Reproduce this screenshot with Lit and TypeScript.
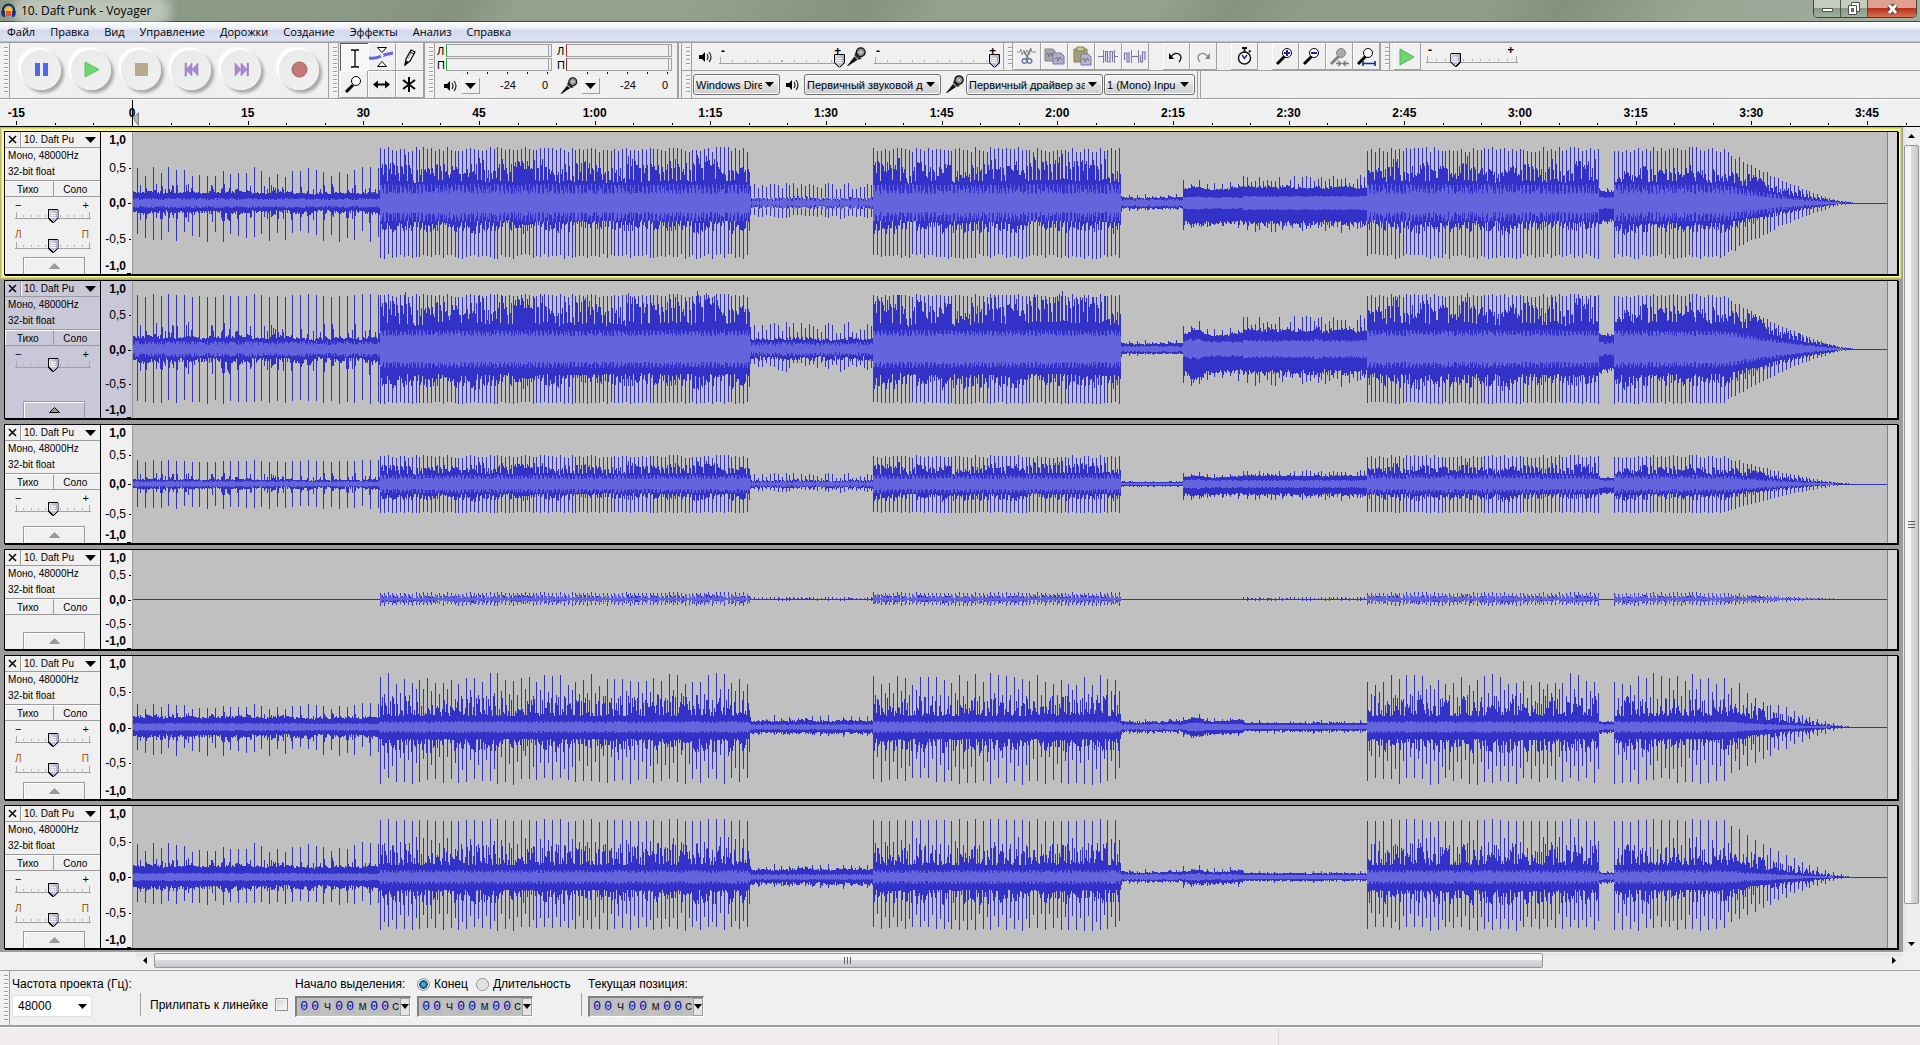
import { LitElement, html, svg, css, nothing } from "lit";
import { customElement, property } from "lit/decorators.js";

/* ---------- waveform model ---------- */

const CLIP_WIDTH = 1754;
const CLIP_SECONDS = 227.6;

interface Band {
  /** first column of the section */
  from: number;
  /** quiet body above / below the axis: [low, high] */
  up: [number, number];
  down: [number, number];
  /** peaks above / below the axis: [low, high] */
  peakUp: [number, number];
  peakDown: [number, number];
  /** distance between peaks in columns */
  period: number;
  /** rms half height: [between beats, on the beat] */
  rms: [number, number];
}

const band = (
  from: number, up: [number, number], down: [number, number],
  peakUp: [number, number], peakDown: [number, number],
  period: number, rms: [number, number],
): Band => ({ from, up, down, peakUp, peakDown, period, rms });

interface Track {
  height: number;
  controls: number;
  /** strength of the swell at the start of the sustained part */
  swell: number;
  selected?: boolean;
  focused?: boolean;
  bands: Band[];
}

const BEAT = 7.75;
const HALF = 3.9;

/* section starts, in columns from the start of the clip */
const VERSE = 247, BREAK = 617, VERSE2 = 740, QUIET = 988, PAD = 1050, PAD2 = 1110;
const VERSE3 = 1234, DIP = 1466, VERSE4 = 1481;

const tracks: Track[] = [
  {
    height: 142, controls: 2, swell: 0.12, focused: true,
    bands: [
      band(0, [8, 15], [7, 13], [26, 37], [28, 40], BEAT, [3, 5]),
      band(VERSE, [19, 50], [17, 32], [51, 56], [51, 56], HALF, [9, 19]),
      band(BREAK, [2, 9], [2, 8], [14, 20], [12, 16], HALF, [1, 6]),
      band(VERSE2, [19, 50], [17, 32], [51, 56], [51, 56], HALF, [9, 19]),
      band(QUIET, [4, 8], [4, 8], [7, 10], [6, 9], BEAT, [2, 4]),
      band(PAD, [12, 19], [16, 25], [16, 23], [20, 27], BEAT, [5, 6]),
      band(PAD2, [13, 21], [17, 28], [18, 28], [20, 30], HALF, [6, 7]),
      band(VERSE3, [19, 50], [17, 32], [51, 56], [51, 56], HALF, [9, 19]),
      band(DIP, [9, 17], [16, 24], [14, 17], [20, 24], BEAT, [5, 6]),
      band(VERSE4, [19, 46], [19, 33], [51, 56], [51, 56], HALF, [9, 19]),
    ],
  },
  {
    height: 137, controls: 1, swell: 0.4, selected: true,
    bands: [
      band(0, [8, 18], [8, 18], [52, 55], [51, 55], BEAT, [4, 8]),
      band(VERSE, [22, 60], [24, 42], [52, 55], [53, 55], HALF, [13, 19]),
      band(BREAK, [7, 15], [6, 15], [16, 27], [14, 24], HALF, [3, 7]),
      band(VERSE2, [22, 60], [24, 42], [52, 55], [53, 55], HALF, [13, 19]),
      band(QUIET, [4, 8], [4, 6], [7, 10], [5, 8], BEAT, [2, 3]),
      band(PAD, [12, 19], [19, 28], [16, 23], [25, 34], BEAT, [6, 8]),
      band(PAD2, [15, 26], [20, 32], [20, 34], [24, 38], HALF, [7, 9]),
      band(VERSE3, [22, 60], [24, 42], [52, 55], [53, 55], HALF, [13, 19]),
      band(DIP, [12, 18], [18, 28], [15, 18], [22, 28], BEAT, [5, 7]),
      band(VERSE4, [24, 56], [24, 42], [52, 55], [53, 55], HALF, [13, 19]),
    ],
  },
  {
    height: 118, controls: 1, swell: 0.2,
    bands: [
      band(0, [3, 7], [3, 7], [22, 24], [22, 25], BEAT, [2, 3]),
      band(VERSE, [9, 24], [9, 18], [26, 29], [28, 29], HALF, [5, 9]),
      band(BREAK, [2, 6], [2, 6], [6, 11], [5, 9], HALF, [1, 3]),
      band(VERSE2, [9, 24], [9, 18], [26, 29], [28, 29], HALF, [5, 9]),
      band(QUIET, [2, 3], [2, 3], [2, 4], [2, 3], BEAT, [1, 1]),
      band(PAD, [6, 9], [8, 14], [8, 11], [12, 16], BEAT, [3, 4]),
      band(PAD2, [7, 11], [9, 15], [8, 14], [10, 17], HALF, [3, 4]),
      band(VERSE3, [9, 24], [9, 18], [26, 29], [28, 29], HALF, [5, 9]),
      band(DIP, [5, 8], [8, 12], [7, 9], [9, 12], BEAT, [3, 4]),
      band(VERSE4, [9, 24], [9, 18], [26, 29], [28, 29], HALF, [5, 9]),
    ],
  },
  {
    height: 99, controls: 0, swell: 0,
    bands: [
      band(0, [0, 0], [1, 1], [0, 0], [1, 1], BEAT, [0, 0]),
      band(VERSE, [1, 5], [1, 5], [5, 7], [5, 7], HALF, [1, 4]),
      band(BREAK, [0, 1], [1, 1], [1, 2], [1, 2], HALF, [0, 0]),
      band(VERSE2, [1, 5], [1, 5], [5, 7], [5, 7], HALF, [1, 4]),
      band(QUIET, [0, 0], [1, 1], [0, 0], [1, 1], BEAT, [0, 0]),
      band(PAD2, [0, 1], [1, 1], [1, 2], [1, 2], HALF, [0, 0]),
      band(VERSE3, [1, 5], [1, 5], [5, 7], [5, 7], HALF, [1, 4]),
      band(DIP, [0, 0], [1, 1], [0, 0], [1, 1], BEAT, [0, 0]),
      band(VERSE4, [1, 5], [1, 5], [5, 7], [5, 7], HALF, [1, 4]),
    ],
  },
  {
    height: 143, controls: 2, swell: 0.5,
    bands: [
      band(0, [7, 15], [7, 13], [18, 24], [20, 30], BEAT, [3, 4]),
      band(VERSE, [11, 32], [12, 26], [26, 54], [28, 58], HALF, [4, 6]),
      band(BREAK, [4, 10], [4, 9], [7, 12], [6, 10], BEAT, [2, 3]),
      band(VERSE2, [11, 32], [12, 26], [26, 54], [28, 58], HALF, [4, 6]),
      band(QUIET, [3, 9], [3, 8], [5, 10], [5, 8], BEAT, [2, 3]),
      band(PAD, [5, 9], [5, 9], [7, 10], [7, 10], BEAT, [3, 3]),
      band(PAD2, [3, 6], [3, 6], [4, 7], [4, 7], BEAT, [2, 2]),
      band(VERSE3, [11, 32], [12, 26], [26, 54], [28, 58], HALF, [4, 6]),
      band(DIP, [4, 8], [4, 9], [5, 8], [6, 9], BEAT, [2, 3]),
      band(VERSE4, [11, 32], [12, 26], [26, 54], [28, 58], HALF, [4, 6]),
    ],
  },
  {
    height: 142, controls: 2, swell: 0.3,
    bands: [
      band(0, [8, 16], [8, 15], [25, 35], [24, 28], BEAT, [3, 4]),
      band(VERSE, [12, 34], [13, 28], [26, 58], [36, 54], HALF, [4, 7]),
      band(BREAK, [5, 12], [4, 11], [9, 13], [8, 12], BEAT, [2, 3]),
      band(VERSE2, [12, 34], [13, 28], [26, 58], [36, 54], HALF, [4, 7]),
      band(QUIET, [3, 8], [3, 7], [5, 9], [5, 8], BEAT, [2, 3]),
      band(PAD, [4, 9], [4, 9], [6, 11], [6, 11], BEAT, [2, 3]),
      band(PAD2, [3, 5], [3, 5], [4, 6], [4, 6], BEAT, [2, 2]),
      band(VERSE3, [12, 34], [13, 28], [26, 58], [36, 54], HALF, [4, 7]),
      band(DIP, [3, 7], [4, 9], [5, 8], [6, 9], BEAT, [2, 3]),
      band(VERSE4, [12, 34], [13, 28], [26, 58], [36, 54], HALF, [4, 7]),
    ],
  },
];

const rand = (n: number, salt: number) => {
  let h = Math.imul(n + 1, 0x9e3779b1) ^ Math.imul(salt + 7, 0x85ebca6b);
  h = Math.imul(h ^ (h >>> 15), 0x2c1b3c6d);
  h = Math.imul(h ^ (h >>> 12), 0x297a2d39);
  return ((h ^ (h >>> 15)) >>> 0) / 4294967296;
};

const mix = ([a, b]: [number, number], t: number) => a + (b - a) * t;

const fade = (x: number) => {
  if (x < 1590) return 1;
  const u = (x - 1590) / 135;
  return u >= 1 ? 0 : Math.pow(1 - u, 1.5);
};

/** Extra swell in the sustained part that follows the quiet section. */
const swell = (x: number, amount: number) => {
  const d = (x - 1062) / 8;
  const e = (x - 1184) / 4;
  return 1 + amount * Math.exp(-d * d) + amount * 0.4 * Math.exp(-e * e);
};

function wavePaths(track: Track, index: number) {
  const mid = Math.floor(track.height / 2);
  const upper: number[] = [], lower: number[] = [], rms: number[] = [];
  for (let x = 0; x < CLIP_WIDTH; x++) {
    let b = track.bands[0];
    for (const c of track.bands) if (x >= c.from) b = c;
    const origin = b.from === 0 ? 4 : b.from;
    const step = Math.floor((x - origin) / b.period + 0.001);
    const onBeat = step !== Math.floor((x - 1 - origin) / b.period + 0.001);
    const near = (x - origin) / b.period - step;
    const full = b.from === VERSE || b.from === VERSE2 || b.from === VERSE3 || b.from === VERSE4;
    const sparse = index >= 4;
    // a few beats share a level, so the body looks clustered
    const phrase = Math.floor(x / 13);
    const cluster = full && sparse
      ? Math.pow(rand(x, 9), 1.8)
      : 0.35 * rand(phrase, 3) + 0.3 * rand(step, 5) + 0.35 * rand(x, 9);
    const clusterDown = full && sparse ? Math.pow(rand(x, 11), 1.8) : 0.3 * rand(phrase, 7) + 0.7 * rand(x, 11);
    const gap = full && !sparse && near > 0.7 ? (rand(step, 41) > 0.45 ? 0.2 : 0.8) : 1;
    const decay = full ? 1 : 1 - 0.4 * near;
    const g = fade(x) * (x > QUIET && x < VERSE3 ? swell(x, track.swell) : 1);
    let up = mix(b.up, cluster * gap * decay);
    let down = mix(b.down, clusterDown * gap * decay);
    let r = mix(b.rms, full ? (near < 0.3 ? 0.9 : 0.7 * rand(x, 13) * gap) : rand(x, 13));
    if (onBeat) {
      let strong = rand(x, 17);
      let strongDown = rand(x, 19);
      if (sparse && full) {
        strong = step % 2 === 0 ? (index === 5 ? 0.92 : 0.55) + (index === 5 ? 0.08 : 0.45) * strong : 0.45 * strong;
        strongDown = step % 2 === 0 ? 0.75 + 0.25 * strongDown : 0.5 * strongDown;
      }
      up = mix(b.peakUp, strong);
      down = mix(b.peakDown, strongDown);
      r = mix(b.rms, 0.85 + 0.15 * rand(x, 23));
    } else if (b.from === 0 && index !== 3 && rand(x, 29) > 0.72) {
      up += (b.peakUp[1] - b.up[1]) * 0.4 * rand(x, 31);
      down += (b.peakDown[1] - b.down[1]) * 0.35 * rand(x, 37);
    }
    upper.push(Math.round(up * g));
    lower.push(Math.max(1, Math.round(down * g)));
    rms.push(Math.round(r * g));
  }
  const outline = (top: number[], bottom: number[]) => {
    let d = `M0 ${mid}`;
    for (let x = 0; x < CLIP_WIDTH; x++) d += `V${mid - top[x]}H${x + 1}`;
    for (let x = CLIP_WIDTH - 1; x >= 0; x--) d += `V${mid + bottom[x]}H${x}`;
    return d + "Z";
  };
  return { peaks: outline(upper, lower), rms: outline(rms, rms) };
}

/* ---------- shared styles ---------- */

const base = css`
  * { box-sizing: border-box; }
  button, input, select {
    font: inherit; color: inherit; margin: 0; padding: 0; border: 0; border-radius: 0;
    background: none; appearance: none; outline: none;
  }
  svg { display: block; }
  .range { display: block; width: 100%; height: 14px; background:
      linear-gradient(#a0a0a0, #a0a0a0) 0 9px / 100% 1px no-repeat,
      linear-gradient(#a8a8a8, #a8a8a8) calc(100% - 1px) 3px / 1px 6px no-repeat,
      linear-gradient(#a8a8a8, #a8a8a8) 1px 3px / 1px 6px no-repeat,
      repeating-linear-gradient(90deg, #b0b0b0 0 1px, transparent 1px 10%) 1px 6px / calc(100% - 3px) 2px no-repeat; }
  .range::-webkit-slider-thumb {
    appearance: none; width: 11px; height: 14px;
    clip-path: polygon(1px 0, 10px 0, 11px 1px, 11px 9px, 6px 14px, 5px 14px, 0 9px, 0 1px);
    background:
      linear-gradient(#fff, #fff) 3px 4px / 5px 1px no-repeat,
      linear-gradient(#fff, #fff) 3px 6px / 5px 1px no-repeat,
      linear-gradient(#fff, #fff) 3px 8px / 5px 1px no-repeat,
      linear-gradient(90deg, #dcdcec, #acacca) 1px 1px / 9px 8px no-repeat,
      conic-gradient(from -45deg at 50% 100%, #bcbcd6 90deg, #000 0) 1px 9px / 9px 4px no-repeat,
      #000;
  }
`;

const speaker = svg`<g fill="#000"><path d="M1 5h3l3-3v10l-3-3H1z"/><path d="M9 4q2 3 0 6M11 2q4 5 0 10" fill="none" stroke="#222" stroke-width="1.2"/></g>`;
const microphone = svg`<g><path d="M1 18L8 9l3 3-9 6z" fill="#111"/><path d="M8 8l4 4 3-1-6-6z" fill="#333"/><circle cx="14" cy="5" r="4.2" fill="#777" stroke="#111" stroke-width="1.2"/><path d="M12 3l4 4M16 3l-4 4M14 2v6M11 5h6" stroke="#ddd" stroke-width=".7"/></g>`;

/* ---------- one audio track ---------- */

@customElement("audio-track")
export class AudioTrack extends LitElement {
  @property({ attribute: false }) track!: Track;
  @property({ type: Number }) index = 0;

  static styles = [base, css`
    :host { display: block; font: 11px/16px "Liberation Sans", Arial, sans-serif; color: #000; }
    .track { display: flex; border: 1px solid #000; box-shadow: 1px 1px 0 #000; --face: #f0f0f0; }
    .selected { --face: #c8c8d8; }
    .focused { box-shadow: 1px 1px 0 #000, 0 0 0 2px #ffff80, 0 0 0 3px #dcdc6e, 0 0 0 4px #b8b882; }
    .panel { flex: none; width: 96px; border-right: 1px solid #000; background: var(--face);
      display: flex; flex-direction: column; }
    .head { display: flex; height: 16px; border-bottom: 1px solid #9a9a9a; }
    .close { width: 16px; border-right: 1px solid #9a9a9a; display: grid; place-items: center; }
    .name { flex: 1; display: flex; align-items: center; justify-content: space-between;
      padding: 0 4px 0 2px; border-left: 1px solid #fff; font-size: 10px; white-space: nowrap; }
    .format { margin: 0; padding: 0 3px; height: 32px; font-size: 10px; line-height: 16px; white-space: nowrap; }
    .pair { display: flex; height: 17px; border-top: 1px solid #9a9a9a; border-bottom: 1px solid #9a9a9a; }
    .pair button { flex: 1; border: 1px solid #fff; border-width: 1px 0 0 1px; font-size: 10px; line-height: 13px; padding-right: 3px; }
    .pair button + button { border-left-color: #9a9a9a; }
    .sliders { display: flex; flex-direction: column; gap: 7px; padding: 3px 9px 0 10px; }
    .slider { display: block; height: 23px; }
    .ends { display: flex; justify-content: space-between; padding: 0 2px 0 0; height: 9px; line-height: 10px; }
    .letters { color: #9a5a20; font-size: 10px; }
    .collapse { margin: auto auto 0 18px; width: 62px; height: 17px; border: 1px solid #9a9a9a;
      border-bottom: 0; box-shadow: inset 1px 1px 0 #fff; display: grid; place-items: center; }
    .scale { flex: none; width: 32px; border: 1px solid #9a9a9a; border-width: 0 1px 0 0;
      background: var(--face); font-size: 12px; }
    .scale svg, .wave svg { width: 100%; height: 100%; }
    .bold { font-weight: bold; }
    .wave { flex: 1; min-width: 0; background: #c0c0c0; }
    .after { flex: none; width: 10px; background: #d4d4d4; border-left: 1px solid #808080; }
  `];

  private slider(label: string, left: string, right: string, letters = false) {
    return html`<label class="slider">
      <span class="ends ${letters ? "letters" : ""}"><span>${left}</span><span>${right}</span></span>
      <input class="range" type="range" min="0" max="100" value="50" aria-label=${label} />
    </label>`;
  }

  render() {
    const t = this.track;
    const h = t.height;
    const wave = wavePaths(t, this.index);
    const label = (y: string, text: string, bold = false) =>
      svg`<text class=${bold ? "bold" : ""} x="25" y=${y} dy="4" text-anchor="end">${text}</text>`;
    return html`<section class="track ${t.selected ? "selected" : ""} ${t.focused ? "focused" : ""}">
      <div class="panel">
        <div class="head">
          <button class="close" aria-label="Закрыть"><svg width="9" height="9" viewBox="0 0 9 9"><path d="M1 1l7 7M8 1L1 8" stroke="#000" stroke-width="1.5"/></svg></button>
          <button class="name"><span>10. Daft Pu</span><svg width="11" height="6" viewBox="0 0 11 6"><path d="M0 0h11L5.500 6z"/></svg></button>
        </div>
        <p class="format">Моно, 48000Hz<br />32-bit float</p>
        <div class="pair"><button>Тихо</button><button>Соло</button></div>
        <div class="sliders">
          ${t.controls > 0 ? this.slider("Громкость", "−", "+") : nothing}
          ${t.controls > 1 ? this.slider("Баланс", "Л", "П", true) : nothing}
        </div>
        <button class="collapse" aria-label="Свернуть"><svg width="11" height="6" viewBox="0 0 11 6"><path d="M.5 5.500h10L5.500 .5z" fill="#9a9a9a" stroke=${t.selected ? "#000" : "#9a9a9a"}/></svg></button>
      </div>
      <div class="scale" style="height:${h}px">
        <svg>
          ${label("8", "1,0", true)}${label("25%", "0,5")}${label("50%", "0,0", true)}${label("75%", "-0,5")}
          <g transform="translate(0 -8)">${label("100%", "-1,0", true)}</g>
          <g shape-rendering="crispEdges" fill="#000">
            <rect x="28" y="25%" width="2" height="1"/><rect x="27" y="50%" width="3" height="1"/>
            <rect x="28" y="75%" width="2" height="1"/>
            <g transform="translate(0 -1)"><rect x="26" y="100%" width="4" height="1"/></g>
          </g>
        </svg>
      </div>
      <div class="wave">
        <svg viewBox="0 0 ${CLIP_WIDTH} ${h}" preserveAspectRatio="none" shape-rendering="crispEdges">
          <path d=${wave.peaks} fill="#3232c8"/><path d=${wave.rms} fill="#6464dc"/>
        </svg>
      </div>
      <div class="after"></div>
    </section>`;
  }
}

/* ---------- application window ---------- */

const menu = ["Файл", "Правка", "Вид", "Управление", "Дорожки", "Создание", "Эффекты", "Анализ", "Справка"];

const transport = [
  { name: "Пауза", icon: svg`<path d="M8 8h5v13H8zM16 8h5v13h-5z" fill="#4a6ae8"/>` },
  { name: "Воспроизвести", icon: svg`<path d="M8 7l14 7.500-14 7.500z" fill="#6cd86c" stroke="#58b058" stroke-width=".8"/>` },
  { name: "Остановить", icon: svg`<path d="M8 8h13v13H8z" fill="#b8a88c"/>` },
  { name: "К началу", icon: svg`<path d="M8 8h1.500v13H8zM15 8v13l-6-6.500zM21 8v13l-6-6.500z" fill="#a888d4" stroke="#8c70b8" stroke-width=".5"/>` },
  { name: "К концу", icon: svg`<path d="M20 8h1.500v13H20zM8 8v13l6-6.500zM14 8v13l6-6.500z" fill="#a888d4" stroke="#8c70b8" stroke-width=".5"/>` },
  { name: "Записать", icon: svg`<circle cx="14.500" cy="14.500" r="7.500" fill="#c07878" stroke="#a06060"/>` },
];

const tools = [
  { name: "Выделение", icon: svg`<path d="M10 5h3l1 1 1-1h3M14 6v15M10 22h3l1-1 1 1h3" fill="none" stroke="#000" stroke-width="1.3"/>` },
  { name: "Огибающая", icon: svg`<path d="M1 14q7 1 12-2 6-2 12-3" fill="none" stroke="#6464dc" stroke-width="3"/><path d="M9.500 3.500h9L14 8.500zM9.500 22.500h9L14 17.500z" fill="#fff" stroke="#000"/><circle cx="14" cy="11.500" r="1.500" fill="#fff"/>` },
  { name: "Рисование", icon: svg`<path d="M9 21l1-6 5-9 4 2-5 9-5 4z" fill="#fff" stroke="#000" stroke-width="1.200"/><path d="M14 8l4 2M9 21l1-4 2 1z" fill="#000" stroke="#000"/><path d="M12 15l3-6" stroke="#888"/>` },
  { name: "Масштаб", icon: svg`<path d="M6 21l7-7" stroke="#000" stroke-width="3"/><circle cx="16" cy="10" r="4.500" fill="#fff" stroke="#000"/>` },
  { name: "Перемещение", icon: svg`<path d="M9 13.500h10" stroke="#000" stroke-width="2"/><path d="M5 13.500l5-4v8zM22 13.500l-5-4v8z"/>` },
  { name: "Универсальный", icon: svg`<path d="M13 6v15M7 9l12 9M19 9L7 18" stroke="#000" stroke-width="2"/>` },
];

const lens = (fill: string, extra: unknown, stroke = "#000") =>
  svg`<path d="M5 21l8-8" stroke=${stroke} stroke-width="3"/><circle cx="15" cy="10" r="4.500" fill=${fill} stroke=${stroke}/>${extra}`;

const editGroups = [
  [
    { name: "Вырезать", icon: svg`<path d="M3 9h3l1-3 1 6 2-5 1 4 2-4 2 5 2-6 1 3h4" fill="none" stroke="#888" stroke-width=".9"/><path d="M17 5l-5 11M10 9l5 7" stroke="#777" fill="none" stroke-width="1.300"/><circle cx="10.500" cy="18" r="2.300" fill="none" stroke="#7474b4" stroke-width="1.400"/><circle cx="15.500" cy="18" r="2.300" fill="none" stroke="#7474b4" stroke-width="1.400"/>` },
    { name: "Копировать", icon: svg`<path d="M4 6h8l2 2v10H4z" fill="#a8a8a8" stroke="#808088"/><path d="M12 10h8l3 3v8H12z" fill="#b0b0c4" stroke="#7474b4"/><path d="M5 12l2-2 1 4 2-4 1 3M14 16l2-2 1 4 2-4 2 3" fill="none" stroke="#70708c"/>` },
    { name: "Вставить", icon: svg`<path d="M6 6h13v13H6z" fill="#a4a074" stroke="#84804c"/><path d="M9 4h7v4H9z" fill="#ccc8a0" stroke="#84804c"/><path d="M13 11h7l3 3v8H13z" fill="#b8b8c8" stroke="#7474b4"/><path d="M14 17l2-2 1 4 2-4 2 3" fill="none" stroke="#70708c"/>` },
    { name: "Обрезать", icon: svg`<path d="M3 13.500h5M19 13.500h4" stroke="#7474b4" stroke-width="1.200"/><path d="M8.500 7v13M19.500 7v13" stroke="#808080"/><path d="M10.500 19V8.500h2V19h2.500V8.500h2.500V19" fill="none" stroke="#7474b4" stroke-width="1.200"/>` },
    { name: "Тишина", icon: svg`<path d="M9 13.500h8" stroke="#7474b4" stroke-width="1.200"/><path d="M9.500 7v13M16.500 7v13" stroke="#808080"/><path d="M2.500 17v-7h2.500v9h2V9M18.500 12v7h2V9h2.500v8" fill="none" stroke="#7474b4" stroke-width="1.200"/>` },
  ],
  [
    { name: "Отменить", icon: svg`<path d="M8 14q3-5 8-3 4 3 0 8" fill="none" stroke="#111" stroke-width="1.300"/><path d="M6 10v6h5z"/>` },
    { name: "Повторить", icon: svg`<path d="M18 14q-3-5-8-3-4 3 0 8" fill="none" stroke="#888" stroke-width="1.300"/><path d="M20 10v6h-5z" fill="#888"/>` },
  ],
  [
    { name: "Таймер", icon: svg`<circle cx="13.500" cy="15" r="6" fill="#fff" stroke="#111" stroke-width="1.500"/><path d="M11 5h5M13.500 5v4M18 9l1.500-1.500" stroke="#111" stroke-width="1.800"/><path d="M11 12l2.500 3.500 2.500-3.500" fill="none" stroke="#2020a8" stroke-width="1.500"/>` },
  ],
  [
    { name: "Увеличить", icon: lens("#fff", svg`<path d="M12 10h6M15 7v6" stroke="#2020a8" stroke-width="2"/>`) },
    { name: "Уменьшить", icon: lens("#fff", svg`<path d="M12 10h6" stroke="#2020a8" stroke-width="2"/>`) },
    { name: "К выделению", icon: lens("#aaa", svg`<path d="M10 20.500h5M17 20.500h6M12 18l3 2.500-3 2.500M20 18l-3 2.500 3 2.500" fill="none" stroke="#777" stroke-width="1.300"/>`, "#808080") },
    { name: "Весь проект", icon: lens("#fff", svg`<path d="M10 20.500h12M10 18v5M22 18v5" stroke="#2020a8" stroke-width="1.600"/>`) },
  ],
];

const icon27 = (content: unknown) => html`<svg width="26" height="26" viewBox="0 0 26 26">${content}</svg>`;

@customElement("app-root")
export class AppRoot extends LitElement {
  static styles = [base, css`
    :host { display: flex; flex-direction: column; min-height: 100vh; background: #f0f0f0; color: #000;
      font: 12px/16px "Open Sans", "Noto Sans", sans-serif; }
    .title { display: flex; align-items: center; height: 22px; padding: 0 3px 0 1px; border-bottom: 1px solid #404840;
      background: linear-gradient(125deg, #8c9a88 0 18%, #84927f 24%, #93a28f 27% 36%, #84927f 45%, #93a28f 49% 60%, #85937f 64%, #8f9d8b 68% 77%, #84917f 81%, #98a694 88%, #a3ae9f); }
    .title h1 { margin: 0 auto 0 5px; font: inherit; padding: 0 12px 0 0; border-radius: 8px;
      background: rgba(235, 240, 232, .5); box-shadow: 0 0 10px 8px rgba(235, 240, 232, .5); }
    .logo { position: relative; }
    .window { display: flex; align-self: flex-start; height: 18px; border: 1px solid #3c443c; border-top: 0;
      border-radius: 0 0 5px 5px; box-shadow: inset 0 0 0 1px rgba(255, 255, 255, .5); overflow: hidden; }
    .window button { width: 27px; display: grid; place-items: center; border-right: 1px solid #4c544c;
      background: linear-gradient(#c4ccc0 0 45%, #8a9886 50%, #a4b0a0); }
    .window .exit { width: 48px; border: 0; background: linear-gradient(#e0a090 0 45%, #b83020 50%, #d87050); }
    .menu { display: flex; gap: 15px; height: 20px; padding: 0 7px; border-bottom: 1px solid #b4b8cc; font-size: 11px;
      background: linear-gradient(#fff, #e8ecf6 35%, #d4daec 45%, #dce2f2); }
    .menu button { line-height: 19px; }

    .toolbars { display: flex; height: 57px; border-top: 1px solid #a0a0a0; border-bottom: 1px solid #a0a0a0; }
    .grip { flex: none; width: 10px; margin-right: 1px; border-right: 1px solid #a0a0a0; background:
      repeating-linear-gradient(#a0a0a0 0 1px, #fff 1px 2px, transparent 2px 4px) 4px 4px / 4px calc(100% - 8px) no-repeat; }
    .transport { display: flex; align-items: center; gap: 10px; padding: 0 9px 2px 10px; border-right: 1px solid #a0a0a0; }
    .round { width: 40px; height: 40px; border-radius: 50%; display: grid; place-items: center;
      background: linear-gradient(135deg, #e8e8e8, #f2f2f2);
      box-shadow: 3px 3px 3px #a8a8a8, -3px -3px 2px #fff; }
    .round:last-child { margin-left: 8px; }
    .tools { display: grid; grid-template-columns: repeat(3, 28px); grid-template-rows: 28px 27px; border-right: 1px solid #a0a0a0; }
    .tool { border: 1px solid #a0a0a0; border-width: 0 1px 1px 0; box-shadow: inset 1px 1px 0 #fff; overflow: hidden; }
    .tool.on { border: 1px solid #606060; border-width: 1px 0 0 1px; background: #f8f8f8; }
    .meters { display: flex; gap: 5px; padding: 1px 5px 0 1px; border-right: 2px solid #a0a0a0;
      font: 11px/14px "Liberation Sans", Arial, sans-serif; }
    .meter { width: 115px; }
    .channel { display: grid; grid-template-columns: 9px 1fr; height: 14px; }
    .channel i { border: 1px solid #a0a0a0; border-left: 1px solid #30a030; margin-bottom: 1px;
      background: linear-gradient(90deg, #a0a0a0, #a0a0a0) calc(100% - 2px) 0 / 1px 100% no-repeat; }
    .input i { border-left-color: #a03030; }
    .marks { height: 4px; margin: 0 0 1px 30px; background: repeating-linear-gradient(90deg, #000 0 1px, transparent 1px 20px) 0 0 / 100% 2px no-repeat; }
    .level { display: grid; grid-template-columns: 19px 18px 1fr 10px; align-items: center; height: 18px; gap: 4px; padding-left: 2px; }
    .level span { padding-bottom: 3px; }
    .level span:nth-of-type(1) { padding-left: 16px; }
    .drop { width: 18px; height: 16px; border: 1px solid #a0a0a0; border-width: 0 1px 1px 0; display: grid; place-items: center;
      box-shadow: inset 1px 1px 0 #fff; }
    .stack { flex: 1; display: flex; flex-direction: column; min-width: 0; margin-left: 2px; border-left: 1px solid #a0a0a0; }
    .row { display: flex; height: 27px; align-items: stretch; }
    .row + .row { border-top: 1px solid #a0a0a0; height: 28px; }
    .row:first-child { border-bottom: 0; }
    .mixer { display: flex; align-items: center; gap: 7px; padding-left: 5px; }
    .gain { display: block; width: 126px; height: 24px; font-weight: bold; }
    .signs { display: flex; justify-content: space-between; padding: 0 4px 0 2px; height: 9px; line-height: 12px; }
    .mic { margin: 0 0 0 -7px; }
    .mixer .gain:last-child { margin-right: 3px; }
    .edit { display: flex; }
    .edit button { width: 27px; border: 1px solid #a0a0a0; border-width: 0 1px 1px 0; box-shadow: inset 1px 1px 0 #fff; }
    .gap { width: 14px; }
    .row > .grip { border-left: 1px solid #a0a0a0; }
    .row > .grip:first-child { border-left: 0; }
    .play { margin-left: 3px; }
    .speed { width: 92px; margin: 1px 0 0 5px; }
    .devices { display: flex; align-items: center; gap: 1px; padding: 0 2px 0 0; border-right: 1px solid #a0a0a0; }
    .devices .small { margin: 0 4px 0 4px; }
    .devices .tall { margin: 0 0 0 2px; }
    .pick { display: grid; font: 11px/16px "Liberation Sans", Arial, sans-serif; }
    .pick > * { grid-area: 1 / 1; }
    .pick select { height: 21px; padding: 0 17px 0 2px; border: 1px solid #707070; border-radius: 3px; overflow: hidden;
      background: linear-gradient(#f2f2f2, #ebebeb 48%, #dddddd 50%, #cfcfcf); box-shadow: inset 0 0 0 1px #fcfcfc; }
    .pick .arrow, .rate .arrow { justify-self: end; align-self: center; margin: 0 5px 0 0; pointer-events: none; }
    .pick .arrow { margin-right: 6px; }
    .host { width: 87px; }
    .device { width: 137px; }
    .inputs { width: 91px; }
    .end { width: 3px; border-right: 1px solid #a0a0a0; }

    .ruler { height: 28px; padding: 0 33px 0 132px; border-top: 1px solid #fff; border-bottom: 1px solid #000; overflow: hidden;
      font: bold 12px/14px "Liberation Sans", Arial, sans-serif; }
    .ruler svg { width: 100%; height: 26px; overflow: visible; }

    .canvas { display: grid; grid-template-columns: 1fr 17px; }
    .tracks { background: #9c9c9c; padding: 4px 5px 1px 4px; min-width: 0; }
    .tracks audio-track { margin-bottom: 5px; }
    .tracks audio-track:last-child { margin-bottom: 2px; }
    .vbar { display: flex; flex-direction: column; align-items: center; background: linear-gradient(90deg, #e2e2e2, #eee 30%, #f0f0f0); }
    .vbar .thumb { width: 15px; flex: 1; border: 1px solid #969696; border-radius: 2px; display: grid; place-items: center;
      background: linear-gradient(90deg, #f4f4f4 0 45%, #dcdce0 50%, #c8c8cc); }
    .vbar .step { height: 18px; display: grid; place-items: center; }
    .vbar .step:last-child { height: 17px; margin-top: 31px; }
    .hbar { display: flex; height: 17px; margin: 1px 17px 0 136px; background: linear-gradient(#e2e2e2, #eee 30%, #f0f0f0); }
    .hbar .thumb { width: 78.6%; height: 15px; border: 1px solid #969696; border-radius: 2px; display: grid; place-items: center;
      background: linear-gradient(#f4f4f4 0 45%, #dcdce0 50%, #c8c8cc); }
    .hbar .step { width: 18px; height: 15px; display: grid; place-items: center; }
    .hbar .step:last-child { margin-left: auto; }

    .selection { display: flex; height: 57px; border-top: 1px solid #a0a0a0; border-bottom: 2px solid #a0a0a0;
      font: 12px/16px "Liberation Sans", Arial, sans-serif; }
    .field { display: grid; grid-template-rows: 22px 22px; align-content: start; align-items: center; padding-top: 2px;
      white-space: nowrap; }
    .rate { display: grid; width: 80px; }
    .rate > * { grid-area: 1 / 1; }
    .rate select { width: 80px; height: 22px; background: #fff; border: 1px solid #e0e0e0; padding-left: 5px; border-radius: 2px; }
    .project { width: 128px; margin-left: 1px; }
    .snap { border-left: 1px solid #a0a0a0; margin: 22px 7px 9px 0; padding-left: 9px; display: flex; align-items: center; gap: 7px; white-space: nowrap; }
    .check { width: 13px; height: 13px; border: 1px solid #8e8f8f; background: linear-gradient(135deg, #d0d4d8, #f8f8f8); box-shadow: inset 0 0 0 1px #f4f4f4; }
    .time { display: flex; align-items: center; width: 116px; height: 21px; padding: 0 0 0 2px; background: #c0c0c0;
      border: 2px solid #808080; border-color: #808080 #fff #fff #808080; border-width: 2px 1px 1px 2px; }
    .digit { width: 10px; margin-right: 1px; text-align: center; color: #0000c0; background: #bababe;
      font: 13px/15px "Liberation Mono", monospace; height: 15px; }
    .unit { width: 13px; text-align: center; font: 13px/16px "Liberation Mono", monospace; color: #202030; }
    .unit:nth-of-type(3) { width: 9px; }
    .time button { margin-left: auto; width: 10px; height: 18px; display: grid; place-items: center; background: #e4e4e4; border: 1px solid #a0a0a0; }
    .span { width: 155px; margin-left: 6px; }
    .ends { display: flex; align-items: center; gap: 4px; }
    .radio { width: 13px; height: 13px; border: 1px solid #8e8f8f; border-radius: 50%; background: radial-gradient(#e8e8e8, #d0d0d0); box-shadow: inset 0 0 0 1px #f4f4f4; }
    .radio:checked { background: radial-gradient(#50b0e0 0 1px, #104878 4px, #e8eef4 5px); }
    .ends .radio:nth-of-type(2) { margin-left: 4px; }
    .rule { border-left: 1px solid #a0a0a0; margin: 22px 6px 9px 9px; }
    .status { flex: 1; display: flex; min-height: 18px; background: #f1edec; border-top: 1px solid #fff; }
    .status span:first-child { width: 66.6%; border-right: 1px solid #dcd8d7; }
  `];

  private arrow(d: string) {
    return html`<svg class="arrow" width="9" height="5" viewBox="0 0 9 5"><path d=${d} /></svg>`;
  }

  private gain(label: string, value: number, cls = "") {
    return html`<label class="gain ${cls}"><span class="signs"><span>-</span><span>+</span></span>
      <input class="range" type="range" min="0" max="100" .value=${String(value)} aria-label=${label} /></label>`;
  }

  private pick(cls: string, label: string, text: string) {
    return html`<span class="pick"><select class=${cls} aria-label=${label}><option>${text}</option></select>
      ${this.arrow("M0 0h9L4.500 5z")}</span>`;
  }

  private meter(name: string, cls: string, icon: unknown) {
    return html`<div class="meter ${cls}">
      <div class="channel"><span>Л</span><i></i></div>
      <div class="channel"><span>П</span><i></i></div>
      <div class="marks"></div>
      <div class="level">${icon}<button class="drop" aria-label=${name}><svg width="11" height="6" viewBox="0 0 11 6"><path d="M0 0h11L5.500 6z"/></svg></button>
        <span>-24</span><span>0</span></div>
    </div>`;
  }

  private time(label: string) {
    const digit = () => html`<input class="digit" value="0" maxlength="1" aria-label=${label} />`;
    return html`<div class="time" role="group" aria-label=${label}>
      ${["ч", "м", "с"].map((u) => html`${digit()}${digit()}<span class="unit">${u}</span>`)}
      <button aria-label="Формат"><svg width="8" height="5" viewBox="0 0 8 5"><path d="M0 0h8L4 5z"/></svg></button></div>`;
  }

  private ruler() {
    const pos = (s: number) => `${(s / CLIP_SECONDS) * 100}%`;
    const ticks = [];
    for (let s = -15; s <= 230; s += 5) {
      const major = s % 15 === 0;
      ticks.push(svg`<rect x=${pos(s)} y=${major ? 21 : 23} width="1" height=${major ? 4 : 2} shape-rendering="crispEdges"/>`);
      if (major) {
        const text = s < 60 ? String(s) : `${Math.floor(s / 60)}:${String(s % 60).padStart(2, "0")}`;
        ticks.push(svg`<text x=${pos(s)} y="17" text-anchor="middle">${text}</text>`);
      }
    }
    return html`<div class="ruler"><svg>
      ${ticks}
      <path d="M0 0h1v26h-1z"/><path d="M1.500 18.500l5-6v13z" fill="#b8b8b8" stroke="#808080"/>
    </svg></div>`;
  }

  render() {
    return html`
      <header class="title">
        <svg class="logo" width="15" height="15" viewBox="0 0 15 15"><circle cx="7.500" cy="8" r="4" fill="#f8c020"/><path d="M5 8h5v5H5z" fill="#f05020"/><path d="M2 10V7a5.500 5.500 0 0 1 11 0v3" fill="none" stroke="#182060" stroke-width="2"/><path d="M0 8h4v6H2q-2-2-2-6zM11 8h4q0 4-2 6h-2z" fill="#202c90"/></svg>
        <h1>10. Daft Punk - Voyager</h1>
        <div class="window">
          <button aria-label="Свернуть"><svg width="13" height="9" viewBox="0 0 13 9"><path d="M1.500 4.500h10v3h-10z" fill="#fff" stroke="#505050"/></svg></button>
          <button aria-label="Восстановить"><svg width="13" height="13" viewBox="0 0 13 13"><path d="M3.500 .5h8v9h-8z" fill="#fff" stroke="#505050"/><path d="M.5 3.500h8v9h-8z" fill="#fff" stroke="#505050"/><path d="M3.500 6.500h2v3h-2z" fill="#888" stroke="#505050"/></svg></button>
          <button class="exit" aria-label="Закрыть"><svg width="13" height="12" viewBox="0 0 13 12"><path d="M3 2l7 8M10 2l-7 8" stroke="#504040" stroke-width="5"/><path d="M3 2l7 8M10 2l-7 8" stroke="#fff" stroke-width="2.800"/></svg></button>
        </div>
      </header>
      <nav class="menu">${menu.map((m) => html`<button>${m}</button>`)}</nav>

      <div class="toolbars">
        <div class="grip"></div>
        <div class="transport">${transport.map((b) => html`<button class="round" aria-label=${b.name}><svg width="29" height="29" viewBox="0 0 29 29">${b.icon}</svg></button>`)}</div>
        <div class="grip"></div>
        <div class="tools">${tools.map((t, i) => html`<button class="tool ${i === 0 ? "on" : ""}" aria-label=${t.name}>${icon27(t.icon)}</button>`)}</div>
        <div class="grip"></div>
        <div class="meters">
          ${this.meter("Индикатор воспроизведения", "", html`<svg width="18" height="14" viewBox="-4 0 18 14">${speaker}</svg>`)}
          ${this.meter("Индикатор записи", "input", html`<svg width="19" height="18" viewBox="0 0 19 19">${microphone}</svg>`)}
        </div>
        <div class="stack">
          <div class="row">
            <div class="grip"></div>
            <div class="mixer">
              <svg width="14" height="14" viewBox="0 0 14 14">${speaker}</svg>
              ${this.gain("Громкость воспроизведения", 100)}
              <svg class="mic" width="22" height="20" viewBox="0 0 19 19">${microphone}</svg>
              ${this.gain("Громкость записи", 100)}
            </div>
            <div class="grip"></div>
            <div class="edit">${editGroups.map((g, i) => html`${i ? html`<span class="gap"></span>` : nothing}${g.map((b) => html`<button aria-label=${b.name}>${icon27(b.icon)}</button>`)}`)}</div>
            <div class="grip"></div>
            <div class="edit play"><button aria-label="Воспроизвести на скорости">${icon27(svg`<path d="M6 6l14 8-14 8z" fill="#6cd86c" stroke="#58b058"/>`)}</button></div>
            ${this.gain("Скорость", 30, "speed")}
          </div>
          <div class="row">
            <div class="grip"></div>
            <div class="devices">
              ${this.pick("host", "Аудиосистема", "Windows Dire")}
              <svg class="small" width="14" height="14" viewBox="0 0 14 14">${speaker}</svg>
              ${this.pick("device", "Устройство воспроизведения", "Первичный звуковой д")}
              <svg class="tall" width="21" height="19" viewBox="0 0 19 19">${microphone}</svg>
              ${this.pick("device", "Устройство записи", "Первичный драйвер за")}
              ${this.pick("inputs", "Каналы записи", "1 (Mono) Inpu")}
            </div>
            <div class="end"></div>
          </div>
        </div>
      </div>

      ${this.ruler()}

      <main class="canvas">
        <div class="tracks">${tracks.map((t, i) => html`<audio-track .track=${t} .index=${i}></audio-track>`)}</div>
        <div class="vbar">
          <span class="step"><svg width="7" height="4" viewBox="0 0 7 4"><path d="M0 4h7L3.500 0z"/></svg></span>
          <div class="thumb"><svg width="7" height="8" viewBox="0 0 7 8"><path d="M0 .5h7M0 3.500h7M0 6.500h7" stroke="#606060"/></svg></div>
          <span class="step"><svg width="7" height="4" viewBox="0 0 7 4"><path d="M0 0h7L3.500 4z"/></svg></span>
        </div>
      </main>
      <div class="hbar">
        <span class="step"><svg width="4" height="7" viewBox="0 0 4 7"><path d="M4 0v7L0 3.500z"/></svg></span>
        <div class="thumb"><svg width="8" height="7" viewBox="0 0 8 7"><path d="M.5 0v7M3.500 0v7M6.500 0v7" stroke="#606060"/></svg></div>
        <span class="step"><svg width="4" height="7" viewBox="0 0 4 7"><path d="M0 0v7l4-3.500z"/></svg></span>
      </div>

      <div class="selection">
        <div class="grip"></div>
        <div class="field project">
          <label for="rate">Частота проекта (Гц):</label>
          <span class="rate"><select id="rate"><option>48000</option></select>${this.arrow("M0 0h9L4.500 5z")}</span>
        </div>
        <label class="snap">Прилипать к линейке <input class="check" type="checkbox" /></label>
        <div class="field"><span>Начало выделения:</span>${this.time("Начало выделения")}</div>
        <div class="field span">
          <span class="ends">
            <input class="radio" type="radio" name="mode" id="mode-end" checked /><label for="mode-end">Конец</label>
            <input class="radio" type="radio" name="mode" id="mode-length" /><label for="mode-length">Длительность</label>
          </span>
          ${this.time("Конец выделения")}
        </div>
        <div class="rule"></div>
        <div class="field"><span>Текущая позиция:</span>${this.time("Текущая позиция")}</div>
      </div>
      <footer class="status"><span></span><span></span></footer>
    `;
  }
}
